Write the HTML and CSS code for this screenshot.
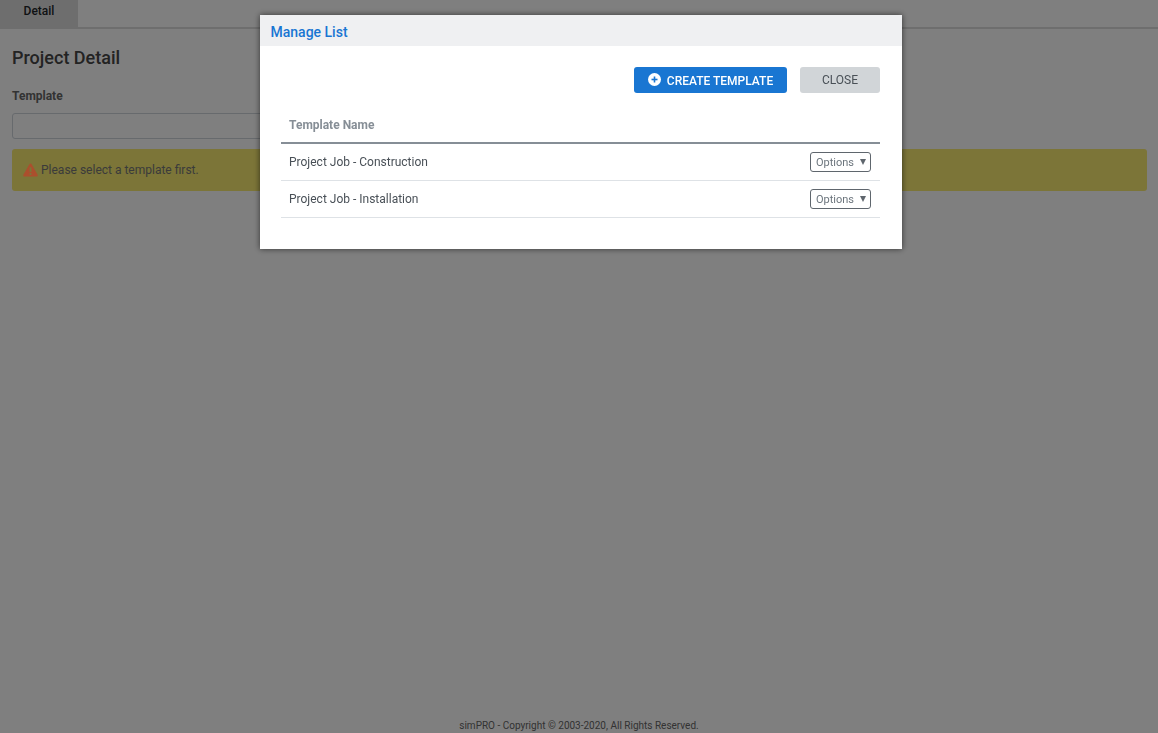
FILE: index.html
```html
<!DOCTYPE html>
<html lang="en">
<head>
    <meta charset="UTF-8">
    <meta name="viewport" content="width=device-width, initial-scale=1.0">
    <title>Project Detail</title>
    <link rel="stylesheet" href="styles.css">
</head>
<body>

    <div class="page">
        <div class="tabs">
            <div class="tab">Detail</div>
        </div>

        <div class="content">
            <h2>Project Detail</h2>
            <label class="field-label" for="template">Template</label>
            <input type="text" id="template" class="field-input">
            <div class="alert">
                <svg class="alert-icon" width="15" height="14" viewBox="0 0 16 15">
                    <path fill-rule="evenodd" d="M8 .5c.5 0 .9.3 1.2.8l6.400 11.300c.5.9-.1 1.900-1.100 1.900H1.500c-1 0-1.600-1-1.100-1.900L6.800 1.300C7.100.8 7.500.5 8 .5zM7 4.500v5.200h2V4.500zM7 10.800v2h2v-2z" fill="#ab4f2d"/>
                </svg>
                <span>Please select a template first.</span>
            </div>
        </div>

        <div class="footer">simPRO - Copyright © 2003-2020, All Rights Reserved.</div>
    </div>

    <div class="overlay"></div>

    <div class="modal">
        <div class="modal-header">Manage List</div>
        <div class="modal-body">
            <div class="modal-actions">
                <button class="btn btn-primary">
                    <svg width="13" height="13" viewBox="0 0 13 13">
                        <circle cx="6.500" cy="6.500" r="6.500" fill="#fff"/>
                        <rect x="3.500" y="5.700" width="6" height="1.600" fill="#1976d2"/>
                        <rect x="5.700" y="3.500" width="1.600" height="6" fill="#1976d2"/>
                    </svg>
                    CREATE TEMPLATE
                </button>
                <button class="btn btn-secondary">CLOSE</button>
            </div>

            <table class="list-table">
                <thead>
                    <tr><th>Template Name</th><th></th></tr>
                </thead>
                <tbody>
                    <tr>
                        <td>Project Job - Construction</td>
                        <td class="options-cell"><button class="options-btn">Options <span class="caret"></span></button></td>
                    </tr>
                    <tr>
                        <td>Project Job - Installation</td>
                        <td class="options-cell"><button class="options-btn">Options <span class="caret"></span></button></td>
                    </tr>
                </tbody>
            </table>
        </div>
    </div>

</body>
</html>
```

FILE: styles.css
```css
* {
    box-sizing: border-box;
}

html, body {
    height: 100%;
}

body {
    font-family: Roboto, "Liberation Sans", sans-serif;
    margin: 0;
    padding: 0;
    background: #fff;
    color: #212529;
    overflow: hidden;
}

/* Page behind the dialog */
.page {
    height: 733px;
    display: flex;
    flex-direction: column;
}

.tabs {
    height: 29px;
    display: flex;
    border-bottom: 2px solid #dcdcdc;
}

.tab {
    width: 78px;
    height: 27px;
    background: #dddddd;
    font-size: 12px;
    font-weight: 500;
    text-align: center;
    line-height: 22px;
}

.content {
    flex: 1;
    padding: 0 11px 0 12px;
}

h2 {
    margin: 18px 0 0;
    font-size: 18px;
    font-weight: 500;
    line-height: 22px;
    color: #464646;
}

.field-label {
    display: block;
    margin-top: 19px;
    font-size: 12px;
    font-weight: 700;
    line-height: 16px;
    color: #666;
}

.field-input {
    display: block;
    width: 50%;
    height: 26px;
    margin-top: 9px;
    border: 1px solid #ced4da;
    border-radius: 3px;
    background: #fff;
}

.alert {
    display: flex;
    align-items: center;
    gap: 3px;
    height: 42px;
    margin-top: 10px;
    padding: 0 11px;
    background: #f8ea70;
    border-radius: 3px;
    font-size: 12px;
    color: #777;
}

/* icon keeps its strong colour through the dim layer */
.alert-icon {
    position: relative;
    z-index: 1;
}

.footer {
    height: 14px;
    font-size: 10px;
    line-height: 14px;
    text-align: center;
    color: #666;
    margin-top: -1px;
}

/* Dim layer */
.overlay {
    position: fixed;
    top: 0;
    left: 0;
    right: 0;
    bottom: 0;
    background: rgba(0, 0, 0, 0.5);
}

/* Dialog */
.modal {
    position: fixed;
    top: 15px;
    left: 260px;
    z-index: 2;
    width: 642px;
    height: 234px;
    background: #fff;
    box-shadow: 0 0 6px rgba(0, 0, 0, 0.6);
}

.modal-header {
    height: 31px;
    padding-left: 10.5px;
    background: #eff0f2;
    color: #1976d2;
    font-size: 14px;
    font-weight: 500;
    line-height: 34px;
}

.modal-body {
    padding: 21px 22px 0 21px;
}

.modal-actions {
    display: flex;
    justify-content: flex-end;
    gap: 13px;
}

.btn {
    height: 26px;
    border: none;
    border-radius: 3px;
    font-family: inherit;
    font-size: 12px;
    padding: 0;
}

.btn-primary {
    display: flex;
    align-items: center;
    justify-content: center;
    gap: 6px;
    width: 153px;
    padding-top: 1px;
    background: #1976d2;
    color: #fff;
    font-weight: 500;
}

.btn-primary svg {
    margin-top: -3px;
}

.btn-secondary {
    width: 80px;
    background: #d1d5d8;
    color: #495057;
}

.list-table {
    width: 100%;
    margin-top: 15px;
    border-collapse: collapse;
    font-size: 12px;
}

.list-table th {
    height: 35px;
    padding: 0 8px;
    text-align: left;
    font-weight: 700;
    color: #868e96;
    border-bottom: 2px solid #868e96;
}

.list-table td {
    height: 37px;
    padding: 0 8px;
    color: #495057;
    border-bottom: 1px solid #dee2e6;
}

.list-table td.options-cell {
    padding-right: 9px;
    text-align: right;
}

.options-btn {
    display: inline-flex;
    align-items: center;
    gap: 6px;
    width: 61px;
    height: 20px;
    padding: 1px 0 0 5px;
    background: #fff;
    border: 1px solid #5f666d;
    border-radius: 3px;
    font-family: inherit;
    font-size: 11px;
    color: #6c757d;
    vertical-align: middle;
}

.caret {
    width: 0;
    height: 0;
    border-left: 3.5px solid transparent;
    border-right: 3.5px solid transparent;
    border-top: 6px solid #5f666d;
}
```
